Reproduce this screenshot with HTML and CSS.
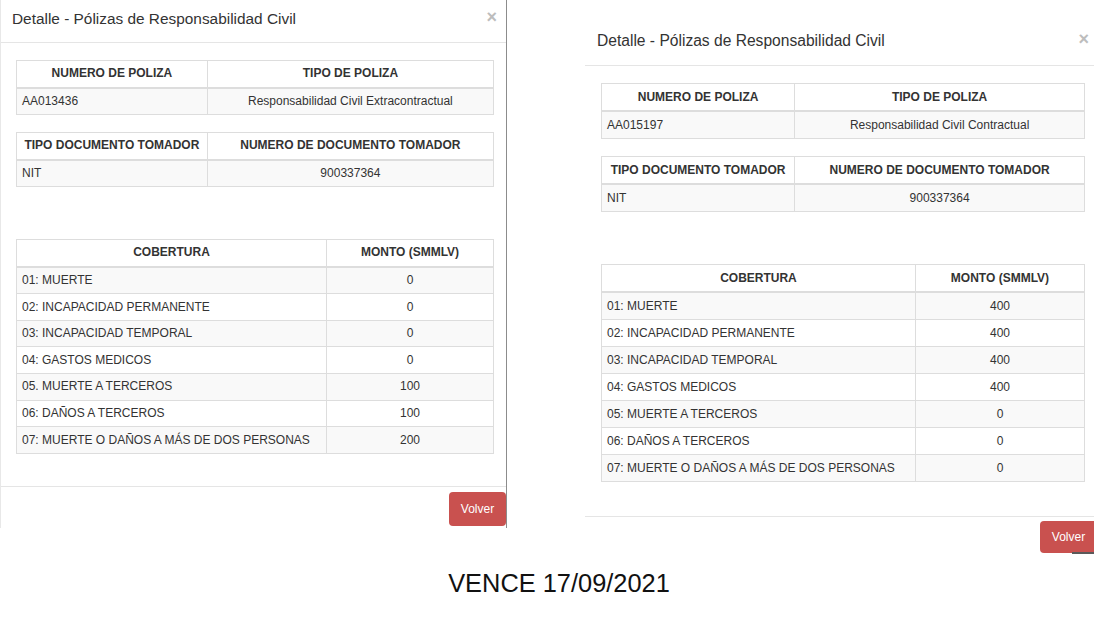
FILE: index.html
```html
<!DOCTYPE html>
<html lang="es">
<head>
<meta charset="utf-8">
<title>Detalle - Pólizas de Responsabilidad Civil</title>
<link rel="stylesheet" href="styles.css">
</head>
<body>
<div class="page">
  <div class="shots">
    <section class="modal modal--left">
      <header class="modal-header">
        <h4 class="modal-title">Detalle - Pólizas de Responsabilidad Civil</h4>
        <button class="close" type="button">×</button>
      </header>
      <div class="modal-body">
        <table class="tbl">
          <colgroup><col class="col-a"><col></colgroup>
          <thead><tr><th>NUMERO DE POLIZA</th><th>TIPO DE POLIZA</th></tr></thead>
          <tbody><tr><td>AA013436</td><td class="center">Responsabilidad Civil Extracontractual</td></tr></tbody>
        </table>
        <table class="tbl tbl--gap">
          <colgroup><col class="col-a"><col></colgroup>
          <thead><tr><th>TIPO DOCUMENTO TOMADOR</th><th>NUMERO DE DOCUMENTO TOMADOR</th></tr></thead>
          <tbody><tr><td>NIT</td><td class="center">900337364</td></tr></tbody>
        </table>
        <table class="tbl tbl--last">
          <colgroup><col class="col-b"><col></colgroup>
          <thead><tr><th>COBERTURA</th><th>MONTO (SMMLV)</th></tr></thead>
          <tbody>
            <tr><td>01: MUERTE</td><td class="center">0</td></tr>
            <tr><td>02: INCAPACIDAD PERMANENTE</td><td class="center">0</td></tr>
            <tr><td>03: INCAPACIDAD TEMPORAL</td><td class="center">0</td></tr>
            <tr><td>04: GASTOS MEDICOS</td><td class="center">0</td></tr>
            <tr><td>05. MUERTE A TERCEROS</td><td class="center">100</td></tr>
            <tr><td>06: DAÑOS A TERCEROS</td><td class="center">100</td></tr>
            <tr><td>07: MUERTE O DAÑOS A MÁS DE DOS PERSONAS</td><td class="center">200</td></tr>
          </tbody>
        </table>
      </div>
      <footer class="modal-footer">
        <button class="btn-volver" type="button">Volver</button>
      </footer>
    </section>

    <section class="modal modal--right">
      <header class="modal-header">
        <h4 class="modal-title">Detalle - Pólizas de Responsabilidad Civil</h4>
        <button class="close" type="button">×</button>
      </header>
      <div class="modal-body">
        <table class="tbl">
          <colgroup><col class="col-a"><col></colgroup>
          <thead><tr><th>NUMERO DE POLIZA</th><th>TIPO DE POLIZA</th></tr></thead>
          <tbody><tr><td>AA015197</td><td class="center">Responsabilidad Civil Contractual</td></tr></tbody>
        </table>
        <table class="tbl tbl--gap">
          <colgroup><col class="col-a"><col></colgroup>
          <thead><tr><th>TIPO DOCUMENTO TOMADOR</th><th>NUMERO DE DOCUMENTO TOMADOR</th></tr></thead>
          <tbody><tr><td>NIT</td><td class="center">900337364</td></tr></tbody>
        </table>
        <table class="tbl tbl--last">
          <colgroup><col class="col-b"><col></colgroup>
          <thead><tr><th>COBERTURA</th><th>MONTO (SMMLV)</th></tr></thead>
          <tbody>
            <tr><td>01: MUERTE</td><td class="center">400</td></tr>
            <tr><td>02: INCAPACIDAD PERMANENTE</td><td class="center">400</td></tr>
            <tr><td>03: INCAPACIDAD TEMPORAL</td><td class="center">400</td></tr>
            <tr><td>04: GASTOS MEDICOS</td><td class="center">400</td></tr>
            <tr><td>05: MUERTE A TERCEROS</td><td class="center">0</td></tr>
            <tr><td>06: DAÑOS A TERCEROS</td><td class="center">0</td></tr>
            <tr><td>07: MUERTE O DAÑOS A MÁS DE DOS PERSONAS</td><td class="center">0</td></tr>
          </tbody>
        </table>
      </div>
      <footer class="modal-footer">
        <button class="btn-volver" type="button">Volver</button>
      </footer>
    </section>
  </div>
  <p class="caption">VENCE 17/09/2021</p>
</div>
</body>
</html>
```

FILE: styles.css
```css
html, body {
  margin: 0;
  padding: 0;
  background: #fff;
}

body {
  font-family: "Liberation Sans", Arial, sans-serif;
  color: #333;
}

.page {
  width: 1094px;
  height: 626px;
  overflow: hidden;
}

.shots {
  display: flex;
  align-items: flex-start;
  height: 555px;
}

.modal {
  flex: none;
  box-sizing: border-box;
  background: #fff;
}

.modal--left {
  width: 507px;
  border-left: 1px solid #e8e8e8;
  border-right: 1px solid #8c8c8c;
}

.modal--right {
  width: 520px;
  margin-left: 78px;
  margin-top: 23px;
}

.modal-header {
  box-sizing: border-box;
  height: 43px;
  display: flex;
  justify-content: space-between;
  align-items: flex-start;
  border-bottom: 1px solid #e5e5e5;
  padding: 8px 9px 0 11px;
}

.modal--right .modal-header {
  padding: 7px 16px 0 12px;
}

.modal-title {
  margin: 0;
  font-size: 15.4px;
  font-weight: normal;
  line-height: 22px;
  color: #333;
}

.modal--right .modal-title {
  font-size: 15.6px;
}

.close {
  background: none;
  border: 0;
  padding: 0;
  margin-top: -2px;
  font-family: "Liberation Sans", Arial, sans-serif;
  font-size: 18px;
  font-weight: bold;
  line-height: 22px;
  color: #bdbdbd;
}

.modal-body {
  padding: 17px 12px 32px 15px;
}

.modal--right .modal-body {
  padding: 17px 20px 34px 16px;
}

.tbl {
  width: 100%;
  border-collapse: collapse;
  table-layout: fixed;
  font-size: 12px;
  line-height: 17px;
  margin: 0 0 17px;
  color: #333;
}

.tbl--gap {
  margin-bottom: 52px;
}

.tbl--last {
  margin-bottom: 0;
}

.col-a {
  width: 40%;
}

.col-b {
  width: 65%;
}

.tbl th {
  padding: 4.25px 5px;
  border: 1px solid #ddd;
  border-bottom: 2px solid #ddd;
  font-weight: bold;
  text-align: center;
  white-space: nowrap;
}

.tbl td {
  padding: 4.3px 5px;
  border: 1px solid #ddd;
  white-space: nowrap;
}

.modal--right .tbl th,
.modal--right .tbl td {
  padding: 4.5px 5px;
}

.tbl tbody tr:nth-child(odd) {
  background: #f9f9f9;
}

.tbl .center {
  text-align: center;
}

.modal-footer {
  display: flex;
  justify-content: flex-end;
  border-top: 1px solid #e5e5e5;
  padding: 5px 0 2px;
}

.modal--right .modal-footer {
  padding: 4px 8px 2px 0;
}

.btn-volver {
  position: relative;
  z-index: 0;
  width: 57px;
  height: 34px;
  padding: 0;
  border: 0;
  border-radius: 4px;
  background: #c9514f;
  color: #fff;
  font-family: "Liberation Sans", Arial, sans-serif;
  font-size: 12px;
}

.modal--right .btn-volver {
  height: 32px;
}

.modal--right .btn-volver::after {
  content: "";
  position: absolute;
  left: 32px;
  right: -4px;
  bottom: -1px;
  height: 2px;
  background: #5a5a5a;
  z-index: -1;
}

.caption {
  margin: 14px 0 0;
  padding-left: 24px;
  text-align: center;
  font-size: 25.4px;
  line-height: 29px;
  color: #111;
}
```
